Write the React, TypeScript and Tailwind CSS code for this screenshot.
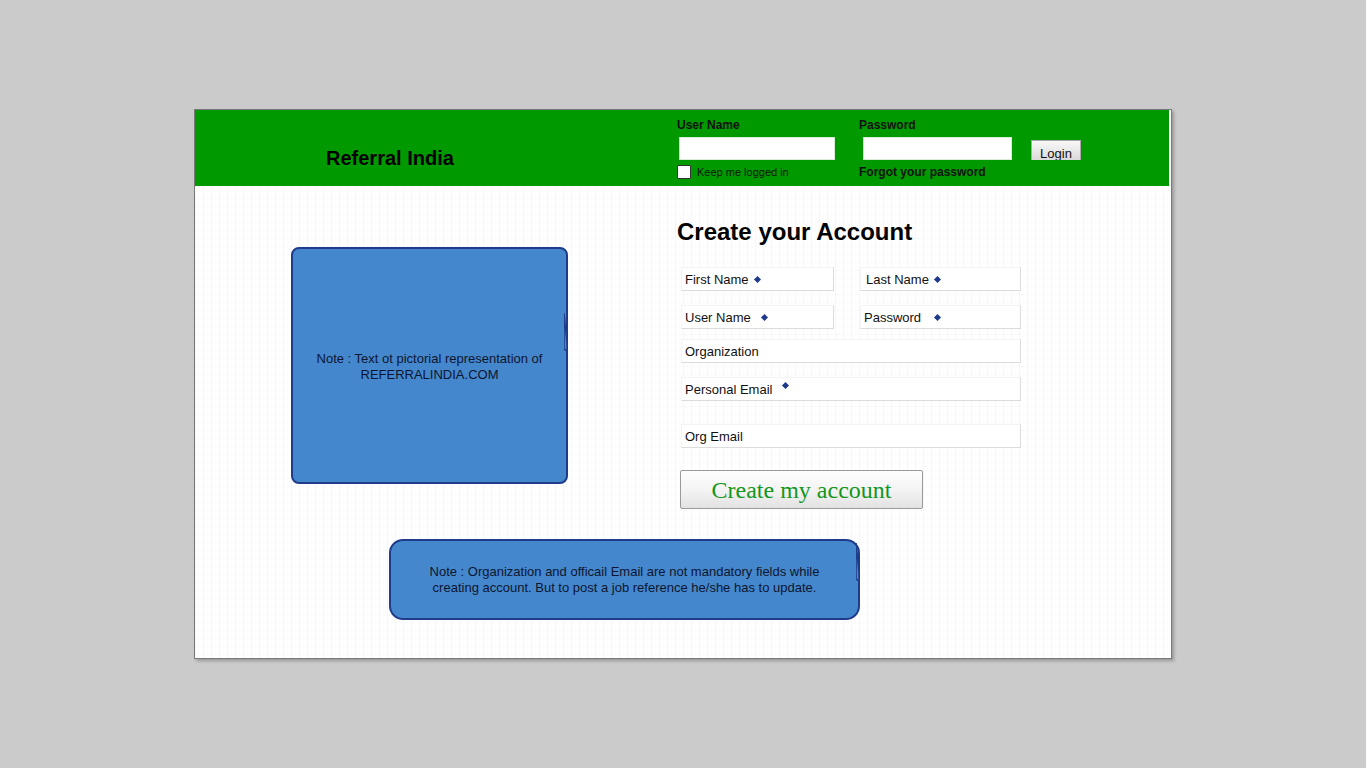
import React from "react";

const sans = { fontFamily: '"Liberation Sans", Arial, sans-serif' };

function Diamond({ className = "" }: { className?: string }) {
  return (
    <span
      className={
        "inline-block w-[5px] h-[5px] bg-[#1f3a8a] rotate-45 " + className
      }
    />
  );
}

function Field({
  label,
  width,
  req,
  diamondGap = "ml-[6px]",
  raised = false,
  labelPad = "pl-[3px]",
}: {
  label: string;
  width: string;
  req?: boolean;
  diamondGap?: string;
  raised?: boolean;
  labelPad?: string;
}) {
  return (
    <div
      className={
        "h-[24px] pt-[2px] bg-white border border-t-[#f4f4f4] border-l-[#f4f4f4] border-r-[#dcdcdc] border-b-[#dcdcdc] flex items-center text-[13px] text-[#111] " +
        width +
        " " +
        labelPad
      }
    >
      <span>{label}</span>
      {req && (
        <Diamond className={diamondGap + (raised ? " -translate-y-[5px]" : " -translate-y-[1px]")} />
      )}
    </div>
  );
}

function Tail({ className = "" }: { className?: string }) {
  return (
    <svg
      className={"absolute " + className}
      width="6"
      height="40"
      viewBox="0 0 6 40"
    >
      <path d="M0 0 L3 30 L3 38 L0 36 Z" fill="#4587cc" stroke="#1f3c8c" strokeWidth="1.5" />
    </svg>
  );
}

export default function App() {
  return (
    <div className="min-h-screen bg-[#cbcbcb] pt-[109px]" style={sans}>
      <div className="mx-auto w-[978px] h-[550px] border border-[#7a7a7a] shadow-[2px_2px_3px_rgba(0,0,0,0.25)] bg-white bg-[linear-gradient(#f9f9f9_1px,transparent_1px),linear-gradient(90deg,#f6f6f6_1px,transparent_1px)] bg-[size:8px_8px]">
        {/* header */}
        <div className="h-[76px] mr-[2px] bg-[#009900] flex">
          <div className="w-[482px] pl-[131px] pt-[36px]">
            <h1 className="text-[20px] font-bold text-black leading-[24px]">
              Referral India
            </h1>
          </div>
          <div className="w-[182px] pt-[8px]">
            <div className="text-[12px] font-bold text-[#111] leading-[15px]">
              User Name
            </div>
            <div className="ml-[2px] mt-[4px] w-[156px] h-[23px] bg-white border border-[#d8ecd8]" />
            <div className="mt-[5px] flex items-center">
              <span className="w-[14px] h-[14px] bg-white border border-[#333] rounded-[1px]" />
              <span className="ml-[6px] text-[11px] text-[#111] leading-[14px]">
                Keep me logged in
              </span>
            </div>
          </div>
          <div className="w-[172px] pt-[8px]">
            <div className="text-[12px] font-bold text-[#111] leading-[15px]">
              Password
            </div>
            <div className="ml-[4px] mt-[4px] w-[149px] h-[23px] bg-white border border-[#d8ecd8]" />
            <div className="mt-[5px] text-[12px] font-bold text-[#111] leading-[14px]">
              Forgot your password
            </div>
          </div>
          <div className="pt-[30px]">
            <div className="w-[50px] h-[20px] border border-b-0 border-[#a8a8a8] bg-[linear-gradient(#f8f8f8,#dadada)] flex items-end justify-center text-[13px] text-[#111] leading-[13px] overflow-hidden">
              Login
            </div>
          </div>
        </div>

        {/* body */}
        <div className="flex">
          <div className="w-[482px] pl-[96px] pt-[61px]">
            <div className="relative w-[277px] h-[237px] bg-[#4587cc] border-2 border-[#1f3c8c] rounded-[8px] flex items-center justify-center text-center">
              <p className="text-[13px] leading-[16px] text-[#0d1630] mt-[2px]">
                Note : Text ot pictorial representation of
                <br />
                REFERRALINDIA.COM
              </p>
              <Tail className="-right-[4px] top-[64px]" />
            </div>
          </div>
          <div className="pt-[32px]">
            <h2 className="text-[24px] font-bold text-black leading-[28px]">
              Create your Account
            </h2>
            <div className="pl-[4px] mt-[21px] flex flex-col">
              <div className="flex gap-[26px]">
                <Field label="First Name" width="w-[153px]" req />
                <Field label="Last Name" width="w-[161px]" req labelPad="pl-[5px]" />
              </div>
              <div className="flex gap-[26px] mt-[14px]">
                <Field label="User Name" width="w-[153px]" req diamondGap="ml-[11px]" />
                <Field label="Password" width="w-[161px]" req diamondGap="ml-[14px]" />
              </div>
              <div className="mt-[10px]">
                <Field label="Organization" width="w-[340px]" />
              </div>
              <div className="mt-[14px]">
                <Field label="Personal Email" width="w-[340px]" req diamondGap="ml-[11px]" raised />
              </div>
              <div className="mt-[23px]">
                <Field label="Org Email" width="w-[340px]" />
              </div>
              <button
                className="mt-[22px] -ml-[1px] w-[243px] h-[39px] border border-[#9a9a9a] rounded-[2px] bg-[linear-gradient(#fdfdfd,#f4f4f4_50%,#e2e2e2)] text-[24px] text-[#13961a] leading-none"
                style={{ fontFamily: '"Liberation Serif", "Times New Roman", serif' }}
              >
                Create my account
              </button>
            </div>
          </div>
        </div>

        <div className="pl-[194px] mt-[30px]">
          <div className="relative w-[471px] h-[81px] bg-[#4587cc] border-2 border-[#1f3c8c] rounded-[14px] flex items-center justify-center text-center">
            <p className="text-[13px] leading-[16px] text-[#0d1630]">
              Note : Organization and officail Email are not mandatory fields while
              <br />
              creating account. But to post a job reference he/she has to update.
            </p>
            <Tail className="-right-[4px] top-[2px]" />
          </div>
        </div>
      </div>
    </div>
  );
}
